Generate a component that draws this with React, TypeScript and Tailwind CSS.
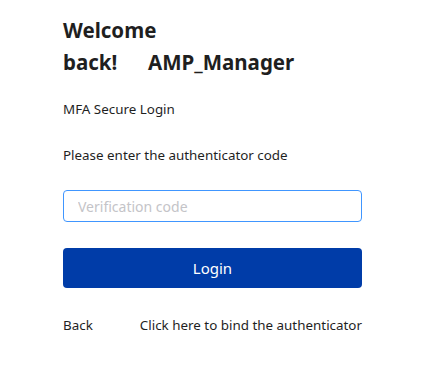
export default function App() {
  return (
    <div
      className="w-[430px] h-[390px] bg-white text-[#1f1f1f]"
      style={{ fontFamily: '"Segoe UI", "Noto Sans", "Open Sans", sans-serif' }}
    >
      <div className="ml-[63px] w-[299px] pt-[14px]">
        <div className="flex items-end gap-[25px] text-[20.5px] font-bold leading-[32px]">
          <span className="w-[60px]">Welcome back!</span>
          <span>AMP_Manager</span>
        </div>
        <p className="mt-[21px] text-[13.4px] leading-[20px]">MFA Secure Login</p>
        <p className="mt-[26px] text-[13.4px] leading-[20px]">Please enter the authenticator code</p>
        <input
          className="mt-[25px] block w-full h-[32px] rounded-[4px] border border-[#4096ff] px-[14px] text-[14px] outline-none placeholder:text-[#c4c4c8]"
          placeholder="Verification code"
        />
        <button className="mt-[26px] block w-full h-[40px] rounded-[4px] bg-[#003ca8] text-white text-[15px]">
          Login
        </button>
        <div className="mt-[27px] flex justify-between text-[13.4px] leading-[20px]">
          <span>Back</span>
          <span>Click here to bind the authenticator</span>
        </div>
      </div>
    </div>
  )
}
